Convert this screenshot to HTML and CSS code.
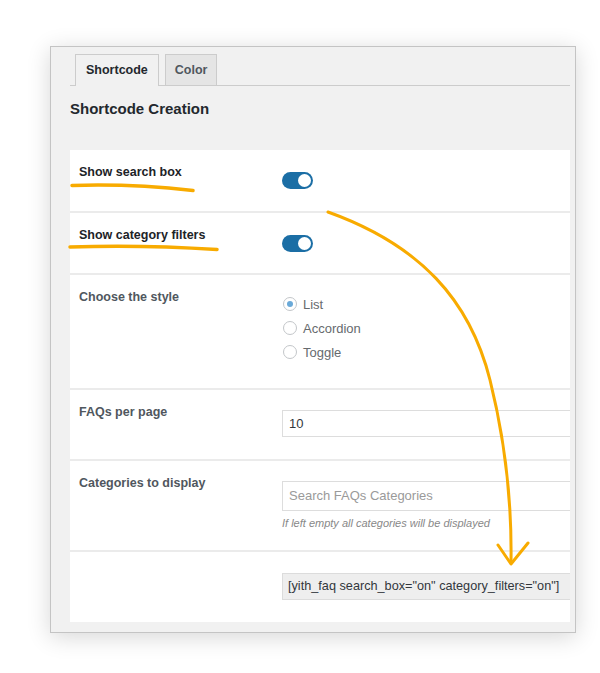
FILE: index.html
```html
<!DOCTYPE html>
<html>
<head>
<meta charset="utf-8">
<link rel="stylesheet" href="styles.css">
</head>
<body>
<div class="window">
  <div class="tabs">
    <div class="tab tab--active">Shortcode</div>
    <div class="tab">Color</div>
  </div>
  <h2 class="title">Shortcode Creation</h2>
  <div class="panel">
    <div class="row row--1">
      <div class="label label--dark">Show search box</div>
      <div class="control"><span class="toggle"><span class="knob"></span></span></div>
    </div>
    <div class="row row--2">
      <div class="label label--dark">Show category filters</div>
      <div class="control"><span class="toggle"><span class="knob"></span></span></div>
    </div>
    <div class="row row--3">
      <div class="label">Choose the style</div>
      <div class="control">
        <ul class="radios">
          <li class="radio-item"><span class="radio radio--on"></span>List</li>
          <li class="radio-item"><span class="radio"></span>Accordion</li>
          <li class="radio-item"><span class="radio"></span>Toggle</li>
        </ul>
      </div>
    </div>
    <div class="row row--4">
      <div class="label">FAQs per page</div>
      <div class="control"><div class="input">10</div></div>
    </div>
    <div class="row row--5">
      <div class="label">Categories to display</div>
      <div class="control">
        <div class="input input--search">Search FAQs Categories</div>
        <div class="help">If left empty all categories will be displayed</div>
      </div>
    </div>
    <div class="row row--6">
      <div class="label"></div>
      <div class="control"><div class="shortcode">[yith_faq search_box="on" category_filters="on"]</div></div>
    </div>
  </div>
</div>
<svg class="marks" width="600" height="673" viewBox="0 0 600 673">
  <path d="M72,185.5 Q130,183.5 193,190.5" class="brush"/>
  <path d="M70,247 Q140,244.5 217,249.5" class="brush"/>
  <path d="M328,212 C420,245 470,300 490,380 C505,440 512,500 511,563" class="arrow"/>
  <path d="M498,545 L511,564 L528,543" class="arrow"/>
</svg>
</body>
</html>
```
FILE: styles.css
```css
html, body {
  margin: 0;
  padding: 0;
  background: #ffffff;
}
body {
  position: relative;
  width: 600px;
  height: 673px;
  overflow: hidden;
  font-family: "Liberation Sans", Arial, sans-serif;
  font-size: 13px;
  color: #23282d;
}
.window {
  box-sizing: border-box;
  margin: 46px 0 0 50px;
  width: 526px;
  height: 587px;
  border: 1px solid #c4c4c4;
  background: #f1f1f1;
  padding: 7px 5px 9px 19px;
  box-shadow: 0 4px 22px rgba(0, 0, 0, 0.16);
}
.tabs {
  display: flex;
  gap: 6px;
  padding-left: 5px;
  height: 31px;
  border-bottom: 1px solid #cccccc;
}
.tab {
  box-sizing: border-box;
  height: 31px;
  padding: 0 9px;
  line-height: 31px;
  border: 1px solid #cccccc;
  border-bottom: none;
  background: #e5e5e5;
  font-weight: bold;
  font-size: 12.5px;
  color: #50575e;
}
.tab--active {
  background: #f1f1f1;
  color: #23282d;
  height: 32px;
  padding: 0 10px;
}
.title {
  margin: 13px 0 31px 0;
  font-size: 15px;
  line-height: 20px;
  font-weight: bold;
  color: #23282d;
}
.panel {
  background: #ffffff;
}
.row {
  box-sizing: border-box;
  display: grid;
  grid-template-columns: 212px 1fr;
  padding-top: 12px;
  border-top: 2px solid #ebebeb;
}
.row--1 { height: 61px; border-top: none; }
.row--2 { height: 62px; }
.row--3 { height: 115px; }
.row--4 { height: 71px; }
.row--5 { height: 91px; }
.row--6 { height: 72px; }
.label {
  padding-left: 9px;
  line-height: 20px;
  font-weight: bold;
  font-size: 12.5px;
  color: #50575e;
}
.label--dark {
  color: #1d2327;
}
.control {
  min-width: 0;
}
.toggle {
  display: block;
  position: relative;
  margin-top: 10px;
  width: 31px;
  height: 17px;
  border-radius: 9px;
  background: #1b6ea5;
}
.knob {
  position: absolute;
  right: 2px;
  top: 2px;
  width: 13px;
  height: 13px;
  border-radius: 50%;
  background: #ffffff;
}
.radios {
  list-style: none;
  margin: 5px 0 0 0;
  padding: 0;
}
.radio-item {
  display: flex;
  align-items: center;
  height: 24px;
  font-size: 13px;
  color: #666a6e;
}
.radio {
  box-sizing: border-box;
  width: 14px;
  height: 14px;
  margin: 0 6px 0 1px;
  border: 1px solid #c3c6c9;
  border-radius: 50%;
  background: #ffffff;
  position: relative;
}
.radio--on::after {
  content: "";
  position: absolute;
  left: 3px;
  top: 3px;
  width: 6px;
  height: 6px;
  border-radius: 50%;
  background: #6aa9d8;
}
.input {
  box-sizing: border-box;
  margin-top: 8px;
  height: 27px;
  border: 1px solid #dddddd;
  border-right: none;
  padding-left: 6px;
  line-height: 25px;
  font-size: 13px;
  color: #32373c;
}
.input--search {
  height: 30px;
  line-height: 28px;
  color: #9a9a9a;
}
.help {
  margin-top: 5px;
  line-height: 14px;
  font-size: 11px;
  font-style: italic;
  color: #888888;
}
.shortcode {
  box-sizing: border-box;
  margin-top: 9px;
  height: 27px;
  border: 1px solid #dcdcdc;
  border-right: none;
  background: #eeeeee;
  padding-left: 5px;
  line-height: 25px;
  font-size: 12.7px;
  color: #32373c;
  white-space: nowrap;
  overflow: hidden;
}
.marks {
  position: absolute;
  left: 0;
  top: 0;
  pointer-events: none;
}
.brush {
  fill: none;
  stroke: #f8ab00;
  stroke-width: 3.5;
  stroke-linecap: round;
}
.arrow {
  fill: none;
  stroke: #f8ab00;
  stroke-width: 3;
  stroke-linecap: round;
  stroke-linejoin: round;
}
```
